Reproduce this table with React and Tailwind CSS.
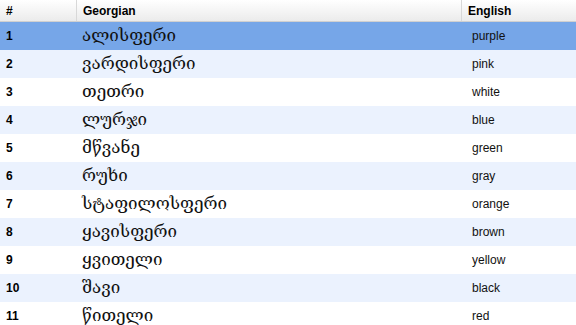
const ROWS = [
  ['ალისფერი', 'purple'],
  ['ვარდისფერი', 'pink'],
  ['თეთრი', 'white'],
  ['ლურჯი', 'blue'],
  ['მწვანე', 'green'],
  ['რუხი', 'gray'],
  ['სტაფილოსფერი', 'orange'],
  ['ყავისფერი', 'brown'],
  ['ყვითელი', 'yellow'],
  ['შავი', 'black'],
  ['წითელი', 'red'],
];

export default function App() {
  return (
    <div className="w-[576px] h-[325px] overflow-hidden bg-white font-['Liberation_Sans',sans-serif]">
      {/* header */}
      <div className="flex h-[22px] border-b border-[#d0d0d0] bg-gradient-to-b from-white to-[#ebebeb] text-[12px] font-bold text-black">
        <div className="w-[77px] pl-[6px] pt-[2px] border-r border-[#d8d8d8]">#</div>
        <div className="w-[385px] pl-[6px] pt-[2px] border-r border-[#d8d8d8]">Georgian</div>
        <div className="flex-1 pl-[6px] pt-[2px]">English</div>
      </div>

      {ROWS.map(([ka, en], i) => {
        const bg = i === 0 ? 'bg-[#76a6e8]' : i % 2 === 1 ? 'bg-[#ebf2fe]' : 'bg-white';
        return (
          <div key={i} className={`flex h-[28px] items-center ${bg}`}>
            <div className="w-[77px] pl-[6px] text-[12px] font-bold text-black">{i + 1}</div>
            <div className="w-[385px] pl-[5px] text-[17px] text-[#111] font-['DejaVu_Serif',serif]">{ka}</div>
            <div className="flex-1 pl-[10px] text-[12px] text-[#111]">{en}</div>
          </div>
        );
      })}
    </div>
  );
}
